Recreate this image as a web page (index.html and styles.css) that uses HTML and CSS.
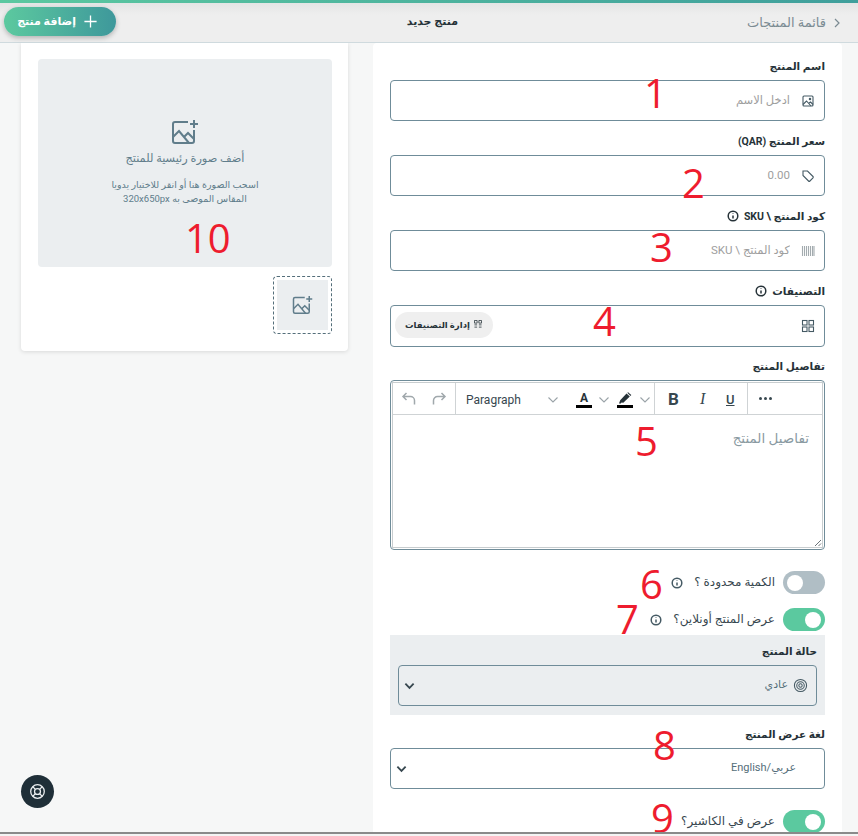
FILE: index.html
```html
<!DOCTYPE html>
<html lang="ar" dir="rtl">
	<head>
		<meta charset="UTF-8" />
		<meta name="viewport" content="width=device-width, initial-scale=1.0" />
		<title>منتج جديد</title>
		<link rel="stylesheet" href="styles.css">
	</head>
	<body>
		<svg class="sprite" width="0" height="0">
			<symbol id="photo-plus" viewBox="0 0 28 26">
				<path d="M17 3H4a2 2 0 0 0-2 2v17a2 2 0 0 0 2 2h17a2 2 0 0 0 2-2V11" />
				<path d="M2 18l6-6 10 12" />
				<path d="M13 18l4-4 6 6" />
				<path d="M23 1v8M19 5h8" />
			</symbol>
			<symbol id="info" viewBox="0 0 12 12">
				<circle cx="6" cy="6" r="4.8" />
				<path d="M6 5.5v3M6 3.4v.6" />
			</symbol>
			<symbol id="chevron" viewBox="0 0 12 8">
				<path d="M1.5 1.5L6 6l4.5-4.5" />
			</symbol>
		</svg>

		<div class="page">
			<div class="top-strip"></div>
			<header class="topbar">
				<a class="back-link" href="javascript:;">
					<svg class="back-icon" viewBox="0 0 8 12"><path d="M2 2l4 4-4 4" /></svg>
					<span>قائمة المنتجات</span>
				</a>
				<h1 class="page-title">منتج جديد</h1>
				<a class="add-btn" href="javascript:;">
					<svg class="add-icon" viewBox="0 0 16 16"><path d="M8 1.5v13M1.5 8h13" /></svg>
					<span>إضافة منتج</span>
				</a>
			</header>

			<main class="content">
				<form class="form-card">
					<div class="field">
						<label class="field-label">اسم المنتج</label>
						<div class="input-box">
							<svg class="input-icon" viewBox="0 0 14 14"><rect x="2" y="2" width="10" height="10" rx="1" /><circle cx="9" cy="5" r=".7" /><path d="M2 10.5l3.500-3.500 4.500 5M8 9l1.500-1 2.500 2.500" /></svg>
							<input class="input-text" type="text" placeholder="ادخل الاسم" />
						</div>
					</div>
					<div class="field">
						<label class="field-label">سعر المنتج (QAR)</label>
						<div class="input-box">
							<svg class="input-icon" viewBox="0 0 14 14"><path d="M2 2h4.500l5.500 5.500a1 1 0 0 1 0 1.400l-3.100 3.100a1 1 0 0 1-1.400 0L2 6.500z" /></svg>
							<input class="input-text" type="text" placeholder="0.00" />
						</div>
					</div>
					<div class="field">
						<label class="field-label">كود المنتج \ SKU <svg class="info-icon"><use href="#info" /></svg></label>
						<div class="input-box">
							<svg class="input-icon barcode" viewBox="0 0 14 14"><path d="M1.500 2v10M3.500 2v10M5.500 2v10M7.500 2v10M9.500 2v10M11.500 2v10M13 2v10" /></svg>
							<input class="input-text" type="text" placeholder="كود المنتج \ SKU" />
						</div>
					</div>
					<div class="field">
						<label class="field-label">التصنيفات <svg class="info-icon"><use href="#info" /></svg></label>
						<div class="input-box category-box">
							<svg class="input-icon" viewBox="0 0 14 14"><rect x="1.500" y="1.500" width="4.500" height="4.500" /><rect x="8" y="1.500" width="4.500" height="4.500" /><rect x="1.500" y="8" width="4.500" height="4.500" /><rect x="8" y="8" width="4.500" height="4.500" /></svg>
							<a class="manage-btn" href="javascript:;">
								<svg class="manage-icon" viewBox="0 0 9 9"><path d="M.5.5h3v3h-3zM5.500.5h3v3h-3zM.5 5.500h3M.5 8h3M5.500 5.500h3M5.500 8h3" /></svg>
								<span>إدارة التصنيفات</span>
							</a>
						</div>
					</div>

					<label class="field-label">تفاصيل المنتج</label>
					<div class="editor">
						<div class="editor-frame">
							<div class="toolbar" dir="ltr">
								<div class="tool-group history-group">
									<svg class="tool-icon muted" viewBox="0 0 16 16"><path d="M5.500 2L2 5.500 5.500 9M2 5.500h7.500a4 4 0 0 1 4 4v4" /></svg>
									<svg class="tool-icon muted" viewBox="0 0 16 16"><path d="M10.500 2L14 5.500 10.500 9M14 5.500H6.500a4 4 0 0 0-4 4v4" /></svg>
								</div>
								<div class="tool-group format-group">
									<span class="format-name">Paragraph</span>
									<svg class="tool-chevron first-chevron"><use href="#chevron" /></svg>
									<span class="color-tool">
										<b class="color-letter">A</b>
									</span>
									<svg class="tool-chevron"><use href="#chevron" /></svg>
									<span class="color-tool">
										<svg class="marker" viewBox="0 0 14 12"><path d="M1 11.500l1.200-3.300 6.300-6.700 3.300 3-6.500 6.200-1.800-.2-.7 1z" /><path d="M9.300.8l.8-.6 3.200 2.900-.8.900z" /></svg>
									</span>
									<svg class="tool-chevron"><use href="#chevron" /></svg>
								</div>
								<div class="tool-group style-group">
									<b class="style-b">B</b>
									<i class="style-i">I</i>
									<u class="style-u">U</u>
								</div>
								<div class="tool-group more-group">
									<span class="dots"><i></i><i></i><i></i></span>
								</div>
							</div>
							<div class="editor-body">
								<p class="editor-placeholder">تفاصيل المنتج</p>
								<svg class="resize-grip" viewBox="0 0 8 8"><path d="M7 1L1 7M7 4.500L4.500 7" /></svg>
							</div>
						</div>
					</div>

					<div class="switch-row limited">
						<span class="switch"></span>
						<span class="switch-text">الكمية محدودة ؟</span>
						<svg class="info-icon"><use href="#info" /></svg>
					</div>
					<div class="switch-row online">
						<span class="switch on"></span>
						<span class="switch-text">عرض المنتج أونلاين؟</span>
						<svg class="info-icon"><use href="#info" /></svg>
					</div>

					<div class="status-panel">
						<label class="field-label">حالة المنتج</label>
						<div class="input-box select-box">
							<svg class="input-icon target" viewBox="0 0 16 16"><circle cx="8" cy="8" r="6.500" /><circle cx="8" cy="8" r="4" /><circle cx="8" cy="8" r="1.800" /></svg>
							<span class="select-value">عادي</span>
							<svg class="select-chevron"><use href="#chevron" /></svg>
						</div>
					</div>

					<div class="lang-field">
						<label class="field-label">لغة عرض المنتج</label>
						<div class="input-box select-box lang-box">
							<span class="select-value">عربي/English</span>
							<svg class="select-chevron"><use href="#chevron" /></svg>
						</div>
					</div>

					<div class="switch-row cashier">
						<span class="switch on"></span>
						<span class="switch-text">عرض في الكاشير؟</span>
					</div>
				</form>

				<aside class="side-card">
					<div class="dropzone">
						<svg class="photo-icon big"><use href="#photo-plus" /></svg>
						<p class="drop-title">أضف صورة رئيسية للمنتج</p>
						<p class="drop-hint">اسحب الصورة هنا أو انقر للاختيار يدويا<br />المقاس الموصى به 320x650px</p>
					</div>
					<div class="thumb-row">
						<div class="thumb">
							<div class="thumb-inner">
								<svg class="photo-icon small"><use href="#photo-plus" /></svg>
							</div>
						</div>
					</div>
				</aside>
			</main>

			<!-- الأرقام الحمراء فوق الصورة -->
			<span class="mark mark-1">1</span>
			<span class="mark mark-2">2</span>
			<span class="mark mark-3">3</span>
			<span class="mark mark-4">4</span>
			<span class="mark mark-5">5</span>
			<span class="mark mark-6">6</span>
			<span class="mark mark-7">7</span>
			<span class="mark mark-8">8</span>
			<span class="mark mark-9">9</span>
			<span class="mark mark-10">10</span>

			<a class="help-btn" href="javascript:;">
				<svg viewBox="0 0 20 20"><circle cx="10" cy="10" r="8" /><circle cx="10" cy="10" r="3.500" /><path d="M4.500 4.500l3 3M15.500 4.500l-3 3M4.500 15.500l3-3M15.500 15.500l-3-3" /></svg>
			</a>
			<div class="window-edge"></div>
		</div>
	</body>
</html>
```

FILE: styles.css
```css
* {
	margin: 0;
	padding: 0;
	box-sizing: border-box;
}

body {
	font-family: Roboto, "DejaVu Sans", sans-serif;
	color: #263238;
	background-color: #f6f7f7;
}

a {
	color: inherit;
	text-decoration: none;
}

svg {
	fill: none;
	stroke: currentColor;
	flex: none;
}

.sprite {
	position: absolute;
}

.page {
	position: relative;
	width: 858px;
	height: 836px;
	overflow: hidden;
}

.top-strip {
	height: 3px;
	background: linear-gradient(to left, #3f9f9c, #5bc8a0);
}

.topbar {
	position: relative;
	display: flex;
	align-items: center;
	height: 40px;
	padding: 0 17px 0 4px;
	background: linear-gradient(#e4e5e5, #eeeeee 30%);
	border-bottom: 1px solid #cfdade;
}

.back-link {
	display: flex;
	align-items: center;
	gap: 7px;
	width: 383px;
	font-size: 13px;
	color: #7b8b93;
}

.back-icon {
	width: 8px;
	height: 12px;
	stroke-width: 1.2;
}

.page-title {
	flex: 1;
	margin-top: -3px;
	font-size: 11px;
	font-weight: 700;
	color: #263238;
}

.add-btn {
	display: flex;
	align-items: center;
	gap: 7px;
	width: 112px;
	height: 29px;
	margin-top: -3px;
	padding: 0 18px 0 0;
	border-radius: 15px;
	font-size: 11px;
	font-weight: 700;
	white-space: nowrap;
	color: #fff;
	background: linear-gradient(to left, #3e989b, #5cc99f);
	box-shadow: 0 2px 5px rgba(0, 0, 0, 0.25);
}

.add-icon {
	width: 15px;
	height: 15px;
	stroke-width: 1.4;
}

.content {
	display: flex;
	align-items: flex-start;
	gap: 25px;
	padding-right: 16px;
}

.form-card {
	width: 469px;
	height: 800px;
	padding: 17px 17px 0;
	background-color: #fff;
	border-radius: 4px 4px 0 0;
}

.field {
	margin-bottom: 14px;
}

.field-label {
	display: flex;
	align-items: center;
	gap: 5px;
	height: 20px;
	padding-bottom: 8px;
	font-size: 10.5px;
	font-weight: 700;
	white-space: nowrap;
	color: #263238;
}

.info-icon {
	width: 12px;
	height: 12px;
	stroke-width: 1.5;
}

.input-box {
	display: flex;
	align-items: center;
	gap: 11px;
	height: 41px;
	padding: 0 9px;
	border: 1px solid #6f8c99;
	border-radius: 4px;
}

.input-icon {
	width: 14px;
	height: 14px;
	stroke-width: 1.1;
	color: #455a64;
}

.barcode {
	color: #a3abaf;
}

.input-text {
	flex: 1;
	min-width: 0;
	margin-top: -2px;
	border: 0;
	outline: 0;
	font-family: inherit;
	font-size: 11.5px;
	color: #263238;
	background: none;
}

.input-text::placeholder {
	color: #9e9e9e;
	opacity: 1;
}

.category-box {
	justify-content: space-between;
	height: 42px;
	margin-bottom: -1px;
	padding-left: 4px;
}

.manage-btn {
	display: flex;
	align-items: center;
	gap: 4px;
	height: 26px;
	margin-top: -2px;
	padding: 0 11px 0 10px;
	border-radius: 13px;
	font-size: 8.5px;
	font-weight: 700;
	white-space: nowrap;
	background-color: #efefef;
}

.manage-icon {
	width: 8px;
	height: 8px;
	stroke-width: 0.9;
	margin-top: -3px;
}

.editor {
	height: 170px;
	padding: 1px;
	border: 1px solid #6f8c99;
	border-radius: 4px;
}

.editor-frame {
	display: flex;
	flex-direction: column;
	height: 100%;
	border: 1px solid #c8cdcf;
}

.toolbar {
	display: flex;
	height: 32px;
	border-bottom: 1px solid #cfd3d5;
}

.tool-group {
	display: flex;
	align-items: center;
	border-right: 1px solid #cfd3d5;
}

.history-group {
	gap: 14px;
	width: 63px;
	padding-left: 8px;
}

.tool-icon {
	width: 16px;
	height: 16px;
	stroke-width: 1.5;
}

.muted {
	color: #a0a8ac;
}

.format-group {
	width: 199px;
	padding-left: 10px;
	padding-top: 2px;
	color: #263238;
}

.format-name {
	width: 81px;
	font-size: 12px;
	color: #37474f;
}

.tool-chevron {
	width: 12px;
	height: 8px;
	stroke-width: 1.1;
	color: #9aa3a8;
}

.first-chevron {
	margin-right: 10px;
}

.color-tool {
	display: flex;
	justify-content: center;
	align-items: flex-end;
	width: 16px;
	height: 16px;
	border-bottom: 3px solid #000;
	margin-right: 6px;
}

.tool-chevron + .color-tool {
	margin-left: 7px;
}

.color-letter {
	font-size: 12px;
	line-height: 13px;
	color: #263238;
}

.marker {
	width: 14px;
	height: 12px;
	fill: #263238;
	stroke: none;
	margin-bottom: 1px;
}

.style-group {
	gap: 21px;
	width: 93px;
	padding-left: 13px;
	padding-top: 1px;
	font-size: 13px;
	color: #37474f;
}

.style-b {
	width: 11px;
	font-size: 17px;
}

.style-i {
	width: 7px;
	font-family: "Liberation Serif", serif;
	font-size: 16px;
}

.style-u {
	width: 9px;
	margin-left: -2px;
	font-weight: 500;
}

.more-group {
	border: 0;
	padding-left: 11px;
}

.dots {
	display: flex;
	gap: 2px;
}

.dots i {
	width: 3px;
	height: 3px;
	border-radius: 50%;
	background-color: #37474f;
}

.editor-body {
	position: relative;
	flex: 1;
	padding: 15px 13px 0;
}

.editor-placeholder {
	font-size: 13.5px;
	color: #8a9aa2;
}

/* tinymce corner handle */
.resize-grip {
	position: absolute;
	right: 0;
	bottom: 0;
	width: 8px;
	height: 8px;
	stroke-width: 1;
	color: #6b7378;
}

.switch-row {
	display: flex;
	align-items: center;
	gap: 8px;
	height: 23px;
	font-size: 12px;
	color: #37474f;
}

.switch-text {
	margin-top: -2px;
}

.switch-row .info-icon {
	margin-right: 3px;
	color: #455a64;
}

.limited {
	margin-top: 21px;
}

.online {
	margin-top: 14px;
}

.cashier {
	margin-top: 21px;
}

.switch {
	display: flex;
	align-items: center;
	justify-content: flex-end;
	width: 42px;
	height: 23px;
	padding: 0 4px;
	border-radius: 12px;
	background-color: #b0bec5;
}

.switch::after {
	content: "";
	width: 16px;
	height: 16px;
	border-radius: 50%;
	background-color: #fff;
}

.switch.on {
	justify-content: flex-start;
	background-color: #5bc99f;
}

.status-panel {
	height: 80px;
	margin-top: 4px;
	padding: 10px 8px 0;
	background-color: #ebeef0;
}

.select-box {
	gap: 5px;
	padding-right: 8px;
}

.select-value {
	flex: 1;
	margin-top: -2px;
	font-size: 11px;
	color: #546e7a;
}

.target {
	width: 15px;
	height: 15px;
}

.select-chevron {
	width: 11px;
	height: 8px;
	stroke-width: 2;
	color: #37474f;
	margin-left: -4px;
}

.lang-field {
	margin-top: 13px;
}

.lang-box {
	padding-right: 28px;
}

.side-card {
	width: 327px;
	height: 308px;
	padding: 16px 16px 0 17px;
	background-color: #fff;
	border-radius: 0 0 4px 4px;
	box-shadow: 0 1px 4px rgba(0, 0, 0, 0.12);
}

.dropzone {
	display: flex;
	flex-direction: column;
	align-items: center;
	height: 208px;
	padding-top: 60px;
	border-radius: 4px;
	background-color: #ebeef0;
	color: #607d8b;
}

.photo-icon {
	color: #607d8b;
}

.photo-icon.big {
	width: 28px;
	height: 26px;
	stroke-width: 2;
}

.photo-icon.small {
	width: 21px;
	height: 20px;
	stroke-width: 2;
}

.drop-title {
	margin-top: 7px;
	font-size: 11.3px;
	color: #607d8b;
}

.drop-hint {
	margin-top: 13px;
	font-size: 9.5px;
	line-height: 14px;
	text-align: center;
	color: #607d8b;
}

.thumb-row {
	display: flex;
	margin-top: 9px;
}

.thumb {
	width: 59px;
	height: 58px;
	padding: 3px;
	border: 1px dashed #546e7a;
	border-radius: 4px;
}

.thumb-inner {
	display: flex;
	align-items: center;
	justify-content: center;
	height: 50px;
	background-color: #ebeef0;
}

/* red numbers lie over the form */
.mark {
	position: absolute;
	font-family: "Open Sans", sans-serif;
	font-size: 40px;
	line-height: 30px;
	color: #ee1c2e;
	direction: ltr;
}

.mark-1 { left: 644px; top: 78px; }
.mark-2 { left: 682px; top: 168px; }
.mark-3 { left: 650px; top: 232px; }
.mark-4 { left: 593px; top: 306px; }
.mark-5 { left: 635px; top: 426px; }
.mark-6 { left: 640px; top: 569px; }
.mark-7 { left: 616px; top: 604px; }
.mark-8 { left: 653px; top: 730px; }
.mark-9 { left: 651px; top: 803px; }
.mark-10 { left: 185px; top: 223px; }

.help-btn {
	position: absolute;
	left: 21px;
	top: 775px;
	display: flex;
	align-items: center;
	justify-content: center;
	width: 33px;
	height: 33px;
	border-radius: 50%;
	background-color: #1f2f38;
	color: #eceff1;
}

.help-btn svg {
	width: 17px;
	height: 17px;
	stroke-width: 1.5;
}

.window-edge {
	position: absolute;
	left: 0;
	right: 0;
	top: 832px;
	bottom: 0;
	border-top: 2px solid #8a8a8a;
	background-color: #f4f4f4;
}
```
